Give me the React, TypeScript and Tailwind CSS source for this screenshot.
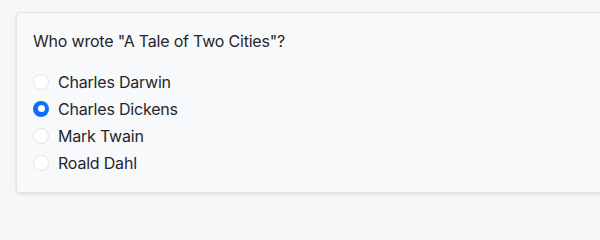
import { useState } from "react";

const options = ["Charles Darwin", "Charles Dickens", "Mark Twain", "Roald Dahl"];

export default function App() {
  const [answer, setAnswer] = useState("Charles Dickens");

  return (
    <div className="min-h-screen w-full overflow-hidden bg-[#f6f7f9] pl-4 pt-3 font-['Inter',sans-serif] tracking-[-0.2px] text-[#24272b]">
      <div className="w-[620px] rounded-[4px] border border-[#e3e5e8] bg-[#f8f9fb] p-4 shadow-[0_1px_3px_rgba(0,0,0,0.12)]">
        <p className="text-base leading-6">Who wrote "A Tale of Two Cities"?</p>
        <div className="mt-[15px] flex flex-col">
          {options.map((option) => {
            const checked = option === answer;
            return (
              <label key={option} className="flex h-[27px] cursor-pointer items-center gap-[9px] text-base leading-6">
                <input
                  type="radio"
                  name="author"
                  checked={checked}
                  onChange={() => setAnswer(option)}
                  className="sr-only"
                />
                {checked ? (
                  <span className="flex h-4 w-4 items-center justify-center rounded-full bg-[#0d6efd]">
                    <span className="h-[7px] w-[7px] rounded-full bg-white" />
                  </span>
                ) : (
                  <span className="h-4 w-4 rounded-full border border-[#e2e4e8] bg-white" />
                )}
                <span>{option}</span>
              </label>
            );
          })}
        </div>
      </div>
    </div>
  );
}
